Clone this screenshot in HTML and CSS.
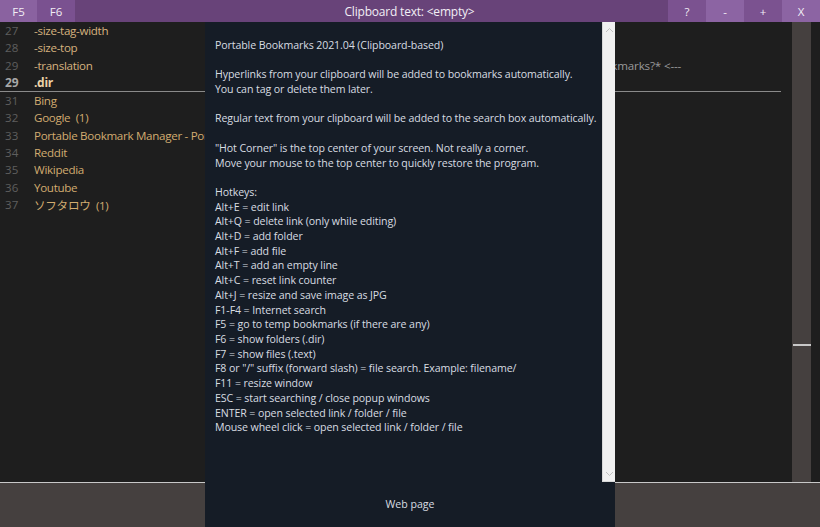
FILE: index.html
```html
<!DOCTYPE html>
<html>
<head>
<meta charset="utf-8">
<link rel="stylesheet" href="styles.css">
</head>
<body>
<div class="app">
  <div class="titlebar">
    <div class="tb-btn f5">F5</div>
    <div class="tb-btn f6">F6</div>
    <div class="title">Clipboard text: &lt;empty&gt;</div>
    <div class="tb-btn dark">?</div>
    <div class="tb-btn light">-</div>
    <div class="tb-btn dark">+</div>
    <div class="tb-btn light">X</div>
  </div>
  <div class="main">
    <div class="list">
      <div class="row meta"><span class="num">27</span><span class="txt">-size-tag-width</span></div>
      <div class="row meta"><span class="num">28</span><span class="txt">-size-top</span></div>
      <div class="row meta"><span class="num">29</span><span class="txt">-translation</span><span class="trans">*Portable Bookmarks?* &lt;---</span></div>
      <div class="row dir"><span class="num">29</span><span class="txt">.dir</span></div>
      <div class="row"><span class="num">31</span><span class="txt">Bing</span></div>
      <div class="row"><span class="num">32</span><span class="txt">Google&nbsp; (1)</span></div>
      <div class="row"><span class="num">33</span><span class="txt">Portable Bookmark Manager - Portable Bookmarks</span></div>
      <div class="row"><span class="num">34</span><span class="txt">Reddit</span></div>
      <div class="row"><span class="num">35</span><span class="txt">Wikipedia</span></div>
      <div class="row"><span class="num">36</span><span class="txt">Youtube</span></div>
      <div class="row"><span class="num">37</span><span class="txt">ソフタロウ&nbsp; (1)</span></div>
    </div>
    <div class="vscroll"><div class="thumb-line"></div></div>
    <div class="edge"></div>
  </div>
  <div class="bottom"></div>

  <div class="dialog">
    <div class="dlg-body">
      <div class="dlg-text">
        <p>Portable Bookmarks 2021.04 (Clipboard-based)</p>
        <p>Hyperlinks from your clipboard will be added to bookmarks automatically.<br>You can tag or delete them later.</p>
        <p>Regular text from your clipboard will be added to the search box automatically.</p>
        <p>"Hot Corner" is the top center of your screen. Not really a corner.<br>Move your mouse to the top center to quickly restore the program.</p>
        <p>Hotkeys:<br>Alt+E = edit link<br>Alt+Q = delete link (only while editing)<br>Alt+D = add folder<br>Alt+F = add file<br>Alt+T = add an empty line<br>Alt+C = reset link counter<br>Alt+J = resize and save image as JPG<br>F1-F4 = Internet search<br>F5 = go to temp bookmarks (if there are any)<br>F6 = show folders (.dir)<br>F7 = show files (.text)<br>F8 or "/" suffix (forward slash) = file search. Example: filename/<br>F11 = resize window<br>ESC = start searching / close popup windows<br>ENTER = open selected link / folder / file<br>Mouse wheel click = open selected link / folder / file</p>
      </div>
      <div class="dlg-scroll">
        <svg class="arrow" width="9" height="6" viewBox="0 0 9 6"><path d="M1 5 L4.5 1.5 L8 5" fill="none" stroke="#c0c0c0" stroke-width="1"/></svg>
        <svg class="arrow" width="9" height="6" viewBox="0 0 9 6"><path d="M1 1 L4.5 4.5 L8 1" fill="none" stroke="#c0c0c0" stroke-width="1"/></svg>
      </div>
    </div>
    <div class="dlg-foot">Web page</div>
  </div>
</div>
</body>
</html>
```

FILE: styles.css
```css
* { box-sizing: border-box; }
html, body {
  margin: 0;
  padding: 0;
  background: #1e1e1e;
}
body {
  width: 820px;
  height: 527px;
  overflow: hidden;
  font-family: "Open Sans", "Noto Sans CJK JP", sans-serif;
}
.app {
  position: relative;
  width: 820px;
  height: 527px;
  display: flex;
  flex-direction: column;
}
.titlebar {
  height: 22px;
  flex: none;
  display: flex;
  background: #684379;
  color: #f2eef5;
  font-size: 11.5px;
}
.tb-btn {
  width: 38px;
  display: flex;
  align-items: center;
  justify-content: center;
}
.f5 { width: 37px; background: #8a62a0; }
.f6 { width: 38px; background: #7a5190; }
.dark { background: #7b5290; }
.light { background: #8c64a3; }
.title {
  flex: 1;
  display: flex;
  align-items: center;
  justify-content: center;
  font-size: 12px;
  letter-spacing: -0.2px;
  padding-left: 76px;
}
.main {
  flex: 1;
  display: flex;
  min-height: 0;
}
.list {
  flex: 1;
  padding-right: 11px;
  overflow: hidden;
}
.row {
  height: 17.33px;
  display: flex;
  align-items: center;
  font-size: 11.6px;
  letter-spacing: -0.3px;
  color: #d2ac70;
  white-space: nowrap;
}
.row .num {
  width: 34px;
  padding-left: 5px;
  color: #5e5e5e;
  letter-spacing: 0;
  flex: none;
}
.row.meta .txt { color: #d6b27e; }
.row .trans {
  margin-left: 444px;
  color: #9a9a9a;
  letter-spacing: -0.15px;
}
.row.dir {
  font-weight: bold;
  font-size: 12px;
  color: #ecd3a8;
  border-bottom: 1px solid #8a8a8a;
  height: 18px;
}
.row.dir .num { color: #a8a8a8; }
.vscroll {
  width: 19px;
  flex: none;
  background: #45403f;
  position: relative;
}
.thumb-line {
  position: absolute;
  left: 1px;
  right: 0;
  top: 322px;
  height: 2px;
  background: #c8c8c8;
}
.edge {
  width: 9px;
  flex: none;
  background: #1e1e1e;
}
.bottom {
  height: 45px;
  flex: none;
  background: #45403f;
  border-top: 1px solid #c8c8c8;
}
.dialog {
  position: absolute;
  left: 205px;
  top: 22px;
  width: 410px;
  height: 505px;
  background: #151c26;
  display: flex;
  flex-direction: column;
  color: #d8dde2;
}
.dlg-body {
  height: 460px;
  display: flex;
  flex: none;
}
.dlg-text {
  flex: 1;
  padding: 16px 0 0 10px;
  font-size: 10.6px;
  letter-spacing: -0.1px;
  line-height: 14.7px;
  white-space: nowrap;
  overflow: hidden;
}
.dlg-text p { margin: 0 0 14.7px 0; }
.dlg-scroll {
  width: 13px;
  flex: none;
  background: #f0f0f0;
  border-left: 1px solid #d8d8d8;
  border-bottom: 1px solid #d8d8d8;
  display: flex;
  flex-direction: column;
  justify-content: space-between;
  align-items: center;
  padding: 5px 0 4px;
}
.dlg-foot {
  flex: 1;
  display: flex;
  align-items: center;
  justify-content: center;
  font-size: 10.6px;
  color: #d8dde2;
  padding-bottom: 1px;
}
```
